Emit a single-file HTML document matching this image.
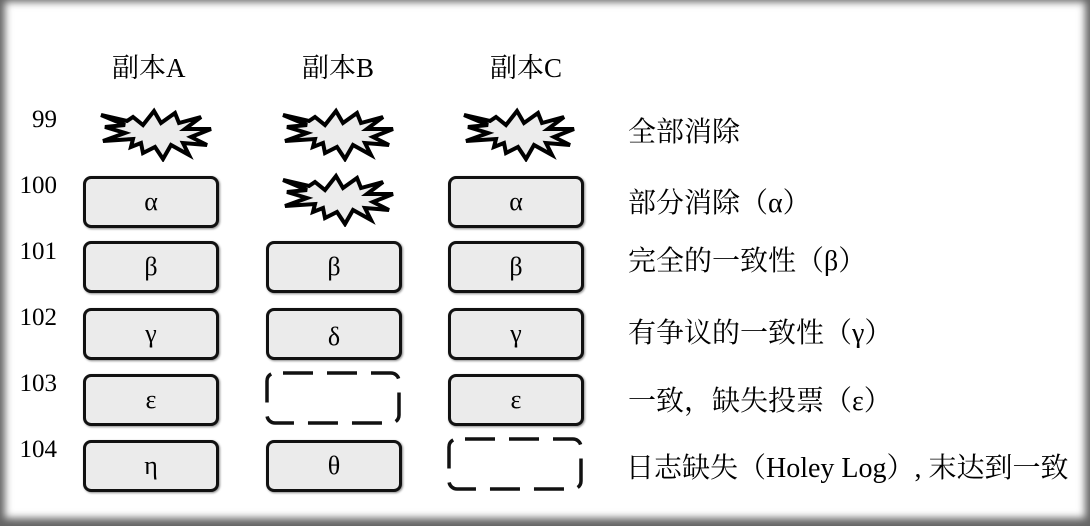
<!DOCTYPE html>
<html><head><meta charset="utf-8"><style>
body{margin:0;width:1090px;height:526px;overflow:hidden;background:#fff;font-family:"Liberation Serif","Noto Serif CJK SC",serif;color:#000}
.frame{position:absolute;left:0;top:0;width:1090px;height:526px;box-shadow:inset 9px 6px 8px -4px #666,inset -9px -12px 8px -4px #666;pointer-events:none}
.t{position:absolute;white-space:nowrap}
.h{font-size:27px;top:46px}
.n{font-size:25px;width:60px;text-align:right;left:-3px}
.l{font-size:28px;left:628px}
.b{position:absolute;width:130px;height:46px;border:3px solid #111;border-radius:8px;background:#ebebeb;box-sizing:content-box;font-size:26px;text-align:center;line-height:46px;box-shadow:1px 1px 2px #888}
svg.s{position:absolute}
</style></head><body>
<div class="t h" style="left:112px">副本A</div>
<div class="t h" style="left:302px">副本B</div>
<div class="t h" style="left:490px">副本C</div>

<div class="t n" style="top:106px">99</div>
<div class="t n" style="top:172px">100</div>
<div class="t n" style="top:238px">101</div>
<div class="t n" style="top:304px">102</div>
<div class="t n" style="top:370px">103</div>
<div class="t n" style="top:436px">104</div>

<svg width="0" height="0" style="position:absolute"><defs><polygon id="st" points="2,8 28,14 34,10 44,18 55,4 62,16 76,6 80,16 102,10 86,22 112,22 92,30 108,38 84,36 90,48 72,38 64,52 56,40 44,46 42,36 32,40 34,32 4,34 26,26 6,20 26,18" fill="#ececec" stroke="#000" stroke-width="4" stroke-linejoin="miter"/></defs></svg>
<svg class="s" style="left:99px;top:107px" width="116" height="55"><use href="#st"/></svg>
<svg class="s" style="left:281px;top:107px" width="116" height="55"><use href="#st"/></svg>
<svg class="s" style="left:462px;top:107px" width="116" height="55"><use href="#st"/></svg>
<svg class="s" style="left:281px;top:172px" width="116" height="55"><use href="#st"/></svg>

<div class="b" style="left:83px;top:176px">α</div>
<div class="b" style="left:448px;top:176px">α</div>
<div class="b" style="left:83px;top:241px">β</div>
<div class="b" style="left:266px;top:241px">β</div>
<div class="b" style="left:448px;top:241px">β</div>
<div class="b" style="left:83px;top:308px">γ</div>
<div class="b" style="left:266px;top:308px;line-height:52px">δ</div>
<div class="b" style="left:448px;top:308px">γ</div>
<div class="b" style="left:83px;top:374px">ε</div>
<div class="b" style="left:448px;top:374px">ε</div>
<div class="b" style="left:83px;top:440px">η</div>
<div class="b" style="left:266px;top:440px">θ</div>
<svg class="s" style="left:264px;top:370px" width="140" height="58"><rect x="3" y="3" width="132" height="50" rx="8" fill="none" stroke="#111" stroke-width="3.5" stroke-dasharray="30,14" stroke-dashoffset="-8"/></svg>
<svg class="s" style="left:446px;top:436px" width="140" height="58"><rect x="3" y="3" width="132" height="50" rx="8" fill="none" stroke="#111" stroke-width="3.5" stroke-dasharray="30,14" stroke-dashoffset="-8"/></svg>

<div class="t l" style="top:110px">全部消除</div>
<div class="t l" style="top:181px">部分消除（α）</div>
<div class="t l" style="top:239px">完全的一致性（β）</div>
<div class="t l" style="top:311px">有争议的一致性（γ）</div>
<div class="t l" style="top:379px">一致，缺失投票（ε）</div>
<div class="t l" style="top:446px;left:626px">日志缺失（Holey Log）, 末达到一致</div>
<div class="frame"></div>
</body></html>
